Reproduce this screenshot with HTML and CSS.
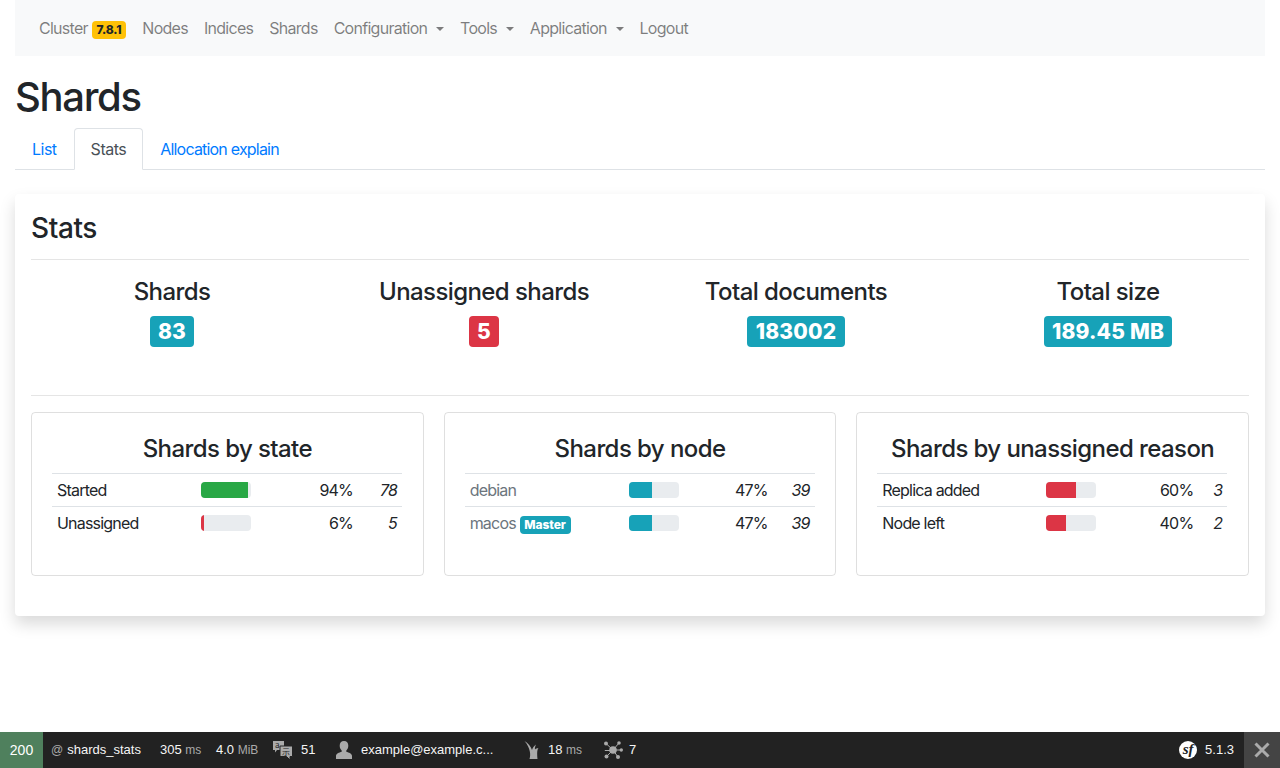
FILE: index.html
```html
<!DOCTYPE html>
<html lang="en">
<head>
    <meta charset="UTF-8">
    <meta name="viewport" content="width=device-width, initial-scale=1.0">
    <title>Shards</title>
    <link rel="stylesheet" href="styles.css">
</head>
<body>
    <div class="container">
        <!-- Main navigation -->
        <nav class="navbar">
            <a class="nav-link" href="#">Cluster <span class="badge badge-warning">7.8.1</span></a>
            <a class="nav-link" href="#">Nodes</a>
            <a class="nav-link" href="#">Indices</a>
            <a class="nav-link" href="#">Shards</a>
            <a class="nav-link dropdown" href="#">Configuration</a>
            <a class="nav-link dropdown" href="#">Tools</a>
            <a class="nav-link dropdown" href="#">Application</a>
            <a class="nav-link" href="#">Logout</a>
        </nav>

        <h1>Shards</h1>

        <ul class="tabs">
            <li><a class="tab" href="#">List</a></li>
            <li><a class="tab active" href="#">Stats</a></li>
            <li><a class="tab tab-long" href="#">Allocation explain</a></li>
        </ul>

        <section class="panel">
            <h3 class="panel-title">Stats</h3>
            <hr>

            <div class="stats">
                <div class="stat">
                    <h4>Shards</h4>
                    <span class="badge badge-big badge-info">83</span>
                </div>
                <div class="stat">
                    <h4>Unassigned shards</h4>
                    <span class="badge badge-big badge-danger">5</span>
                </div>
                <div class="stat">
                    <h4>Total documents</h4>
                    <span class="badge badge-big badge-info">183002</span>
                </div>
                <div class="stat">
                    <h4>Total size</h4>
                    <span class="badge badge-big badge-info">189.45 MB</span>
                </div>
            </div>

            <hr>

            <div class="cards">
                <div class="card">
                    <h4>Shards by state</h4>
                    <table class="table-state">
                        <tr>
                            <td>Started</td>
                            <td><div class="progress"><div class="bar bar-success" style="width: 94%"></div></div></td>
                            <td class="num">94%</td>
                            <td class="num count">78</td>
                        </tr>
                        <tr>
                            <td>Unassigned</td>
                            <td><div class="progress"><div class="bar bar-danger" style="width: 6%"></div></div></td>
                            <td class="num">6%</td>
                            <td class="num count">5</td>
                        </tr>
                    </table>
                </div>

                <div class="card">
                    <h4>Shards by node</h4>
                    <table class="table-node">
                        <tr>
                            <td><a class="node-link" href="#">debian</a></td>
                            <td><div class="progress"><div class="bar bar-info" style="width: 47%"></div></div></td>
                            <td class="num">47%</td>
                            <td class="num count">39</td>
                        </tr>
                        <tr>
                            <td><a class="node-link" href="#">macos</a> <span class="badge badge-info">Master</span></td>
                            <td><div class="progress"><div class="bar bar-info" style="width: 47%"></div></div></td>
                            <td class="num">47%</td>
                            <td class="num count">39</td>
                        </tr>
                    </table>
                </div>

                <div class="card">
                    <h4>Shards by unassigned reason</h4>
                    <table class="table-reason">
                        <tr>
                            <td>Replica added</td>
                            <td><div class="progress"><div class="bar bar-danger" style="width: 60%"></div></div></td>
                            <td class="num">60%</td>
                            <td class="num count">3</td>
                        </tr>
                        <tr>
                            <td>Node left</td>
                            <td><div class="progress"><div class="bar bar-danger" style="width: 40%"></div></div></td>
                            <td class="num">40%</td>
                            <td class="num count">2</td>
                        </tr>
                    </table>
                </div>
            </div>
        </section>
    </div>

    <!-- Debug toolbar -->
    <footer class="toolbar">
        <div class="tb-status">200</div>
        <div class="tb-item tb-route"><span class="tb-dim">@</span> shards_stats</div>
        <div class="tb-item tb-time"><span>305 <span class="tb-dim">ms</span></span></div>
        <div class="tb-item tb-mem"><span>4.0 <span class="tb-dim">MiB</span></span></div>
        <div class="tb-item tb-trans">
            <svg class="tb-icon" width="21" height="20" viewBox="0 0 21 20">
                <path fill="#aaa" d="M1 1h11v9H5l-2 2.500V10H1z"/>
                <path fill="#aaa" stroke="#222" d="M8 6h12.500v10.500H18V20l-3.500-3.500H8z"/>
                <text x="3" y="8" class="tb-glyph" fill="#222">a</text>
                <text x="10" y="15" class="tb-glyph" fill="#222">示</text>
            </svg>
            <span>51</span>
        </div>
        <div class="tb-item tb-user">
            <svg class="tb-icon" width="16" height="18" viewBox="0 0 16 18">
                <path fill="#aaa" d="M8 0c2.800 0 4.300 2 4.300 4.800 0 2-.8 3.700-2 4.700v1.300c2.600.8 5.700 1.800 5.700 4.200V18H0v-3c0-2.400 3.100-3.400 5.700-4.200V9.500c-1.200-1-2-2.700-2-4.700C3.700 2 5.200 0 8 0z"/>
            </svg>
            <span class="tb-email">example@example.c...</span>
        </div>
        <div class="tb-item tb-twig">
            <svg class="tb-icon" width="16" height="20" viewBox="0 0 16 20">
                <path fill="#aaa" d="M.5 1C4 3 7 6.500 8 10c.5-2 2-4 4-5.500-1 2-1.200 3.500-1 5 1-1 2-1.300 3.500-1.500-1.500 2-1.500 5-1 11h-8c1.500-4 1-11-5-18z"/>
            </svg>
            <span>18 <span class="tb-dim">ms</span></span>
        </div>
        <div class="tb-item tb-nodes">
            <svg class="tb-icon" width="20" height="18" viewBox="0 0 20 18">
                <path stroke="#aaa" d="M3 2.500 10 9M16 2 10 9M1.800 9.500H10M18.500 9H10M3.500 15.500 10 9M15 16 10 9"/>
                <g fill="#aaa">
                    <circle cx="10" cy="9" r="3.800"/>
                    <circle cx="3" cy="2.500" r="2"/>
                    <circle cx="16" cy="2" r="1.800"/>
                    <circle cx="18.300" cy="9" r="1.700"/>
                    <circle cx="3.500" cy="15.500" r="2"/>
                    <circle cx="15" cy="16" r="2"/>
                </g>
            </svg>
            <span>7</span>
        </div>
        <div class="tb-item tb-version">
            <span class="sf-logo">sf</span>
            <span>5.1.3</span>
        </div>
        <div class="tb-close">
            <svg width="16" height="16" viewBox="0 0 16 16">
                <path stroke="#aaa" stroke-width="3" d="M1.500 1.500 14.500 14.500M14.500 1.500 1.500 14.500"/>
            </svg>
        </div>
    </footer>
</body>
</html>
```

FILE: styles.css
```css
* {
    box-sizing: border-box;
}
body {
    margin: 0;
    min-height: 100vh;
    display: flex;
    flex-direction: column;
    font-family: Inter, "Noto Sans", sans-serif;
    font-size: 16px;
    line-height: 24px;
    color: #212529;
    background: white;
}
a {
    text-decoration: none;
}
.container {
    padding: 0 15px;
}

/* navbar */
.navbar {
    display: flex;
    align-items: center;
    height: 56px;
    padding: 0 16px;
    background-color: #f8f9fa;
}
.nav-link {
    padding: 8px;
    color: rgba(0, 0, 0, 0.5);
    letter-spacing: -0.72px;
}
.dropdown::after {
    content: "";
    display: inline-block;
    margin-left: 8.800px;
    vertical-align: 3px;
    border-top: 4.8px solid;
    border-right: 4.8px solid transparent;
    border-left: 4.8px solid transparent;
}

/* badges */
.badge {
    display: inline-block;
    padding: 3px 4.800px;
    font-size: 12px;
    font-weight: 800;
    line-height: 12px;
    border-radius: 4px;
    vertical-align: baseline;
    letter-spacing: -0.1px;
}
.badge-big {
    padding: 5.500px 8.400px;
    font-size: 21px;
    line-height: 20px;
    letter-spacing: 0.2px;
}
.badge-warning {
    background: #ffc107;
    color: #212529;
}
.badge-info {
    background: #17a2b8;
    color: white;
}
.badge-danger {
    background: #dc3545;
    color: white;
}

h1 {
    margin: 17px 0 7px;
    font-size: 40px;
    line-height: 48px;
    font-weight: 500;
    letter-spacing: -1.3px;
}

/* tabs */
.tabs {
    display: flex;
    margin: 0 0 24px;
    padding: 0;
    list-style: none;
    border-bottom: 1px solid #dee2e6;
}
.tab {
    display: block;
    margin-bottom: -1px;
    padding: 8px 16px;
    border: 1px solid transparent;
    border-radius: 4px 4px 0 0;
    color: #007bff;
    letter-spacing: -0.5px;
}
.tab-long {
    letter-spacing: -0.8px;
}
.tab.active {
    color: #495057;
    background: white;
    border-color: #dee2e6 #dee2e6 white;
}

/* stats panel */
.panel {
    height: 422px;
    padding: 16px;
    border-radius: 4px;
    background: white;
    box-shadow: 0 8px 16px rgba(0, 0, 0, 0.15);
}
.panel-title {
    margin: 1px 0 0;
    font-size: 28px;
    line-height: 34px;
    font-weight: 500;
    letter-spacing: -0.4px;
}
hr {
    margin: 14px 0 16px;
    border: 0;
    border-top: 1px solid rgba(0, 0, 0, 0.1);
}
h4 {
    margin: 0 0 10px;
    font-size: 24px;
    line-height: 29px;
    font-weight: 500;
    letter-spacing: -0.58px;
}
.stats {
    display: grid;
    grid-template-columns: repeat(4, 1fr);
    margin: 0 -15px;
    padding-top: 1px;
    height: 119px;
    text-align: center;
}
.stats + hr {
    margin-top: 0;
}

/* cards */
.cards {
    display: grid;
    grid-template-columns: repeat(3, 1fr);
    gap: 20px;
}
.card {
    height: 164px;
    padding: 21px 20px 20px;
    border: 1px solid rgba(0, 0, 0, 0.125);
    border-radius: 4px;
}
.card h4 {
    text-align: center;
}
table {
    width: 350px;
    table-layout: fixed;
    border-collapse: collapse;
}
td {
    padding: 4px 5px;
    border-top: 1px solid #dee2e6;
    letter-spacing: -0.8px;
    white-space: nowrap;
}
td:nth-child(2) {
    width: 60px;
}
.table-state td:nth-child(1) { width: 144px; }
.table-state td:nth-child(3) { width: 102px; }
.table-state td:nth-child(4) { width: 44px; }
.table-node td:nth-child(1) { width: 159px; }
.table-node td:nth-child(3) { width: 89px; }
.table-node td:nth-child(4) { width: 42px; }
.table-reason td:nth-child(1) { width: 164px; }
.table-reason td:nth-child(3) { width: 97px; }
.table-reason td:nth-child(4) { width: 29px; }
.num {
    text-align: right;
}
.count {
    font-style: italic;
}
.progress {
    width: 50px;
    height: 16px;
    overflow: hidden;
    border-radius: 4px;
    background: #e9ecef;
}
.bar {
    height: 100%;
}
.bar-success {
    background: #28a745;
}
.bar-danger {
    background: #dc3545;
}
.bar-info {
    background: #17a2b8;
}
.node-link {
    color: #6c757d;
}

/* debug toolbar */
.toolbar {
    display: flex;
    align-items: center;
    height: 36px;
    margin-top: auto;
    background: #222;
    color: #f5f5f5;
    font-family: "Liberation Sans", Arial, sans-serif;
    font-size: 13px;
    line-height: 36px;
}
.tb-status {
    width: 43px;
    text-align: center;
    font-size: 14px;
    color: white;
    background: #4f805d;
}
.tb-item {
    display: flex;
    align-items: center;
    gap: 4px;
    white-space: nowrap;
    flex-shrink: 0;
}
.tb-dim {
    color: #aaa;
    font-size: 12px;
}
.tb-route {
    margin-left: 8px;
    width: 109px;
}
.tb-time {
    width: 56px;
}
.tb-mem {
    width: 56px;
}
.tb-trans {
    gap: 8px;
    width: 64px;
}
.tb-user {
    gap: 9px;
    width: 188px;
}
.tb-email {
    width: 135px;
}
.tb-twig {
    gap: 8px;
    width: 79px;
}
.tb-nodes {
    gap: 6px;
}
.tb-glyph {
    font-family: "Noto Sans CJK SC", sans-serif;
    font-size: 8px;
}
.tb-version {
    gap: 8px;
    margin-left: auto;
    margin-right: 10px;
}
.sf-logo {
    display: block;
    width: 18px;
    height: 18px;
    border-radius: 50%;
    background: white;
    color: #222;
    font-family: "Liberation Serif", serif;
    font-size: 15px;
    font-style: italic;
    font-weight: 700;
    line-height: 17px;
    text-align: center;
}
.tb-close {
    display: flex;
    align-items: center;
    justify-content: center;
    width: 36px;
    height: 36px;
    background: #444;
}
```
